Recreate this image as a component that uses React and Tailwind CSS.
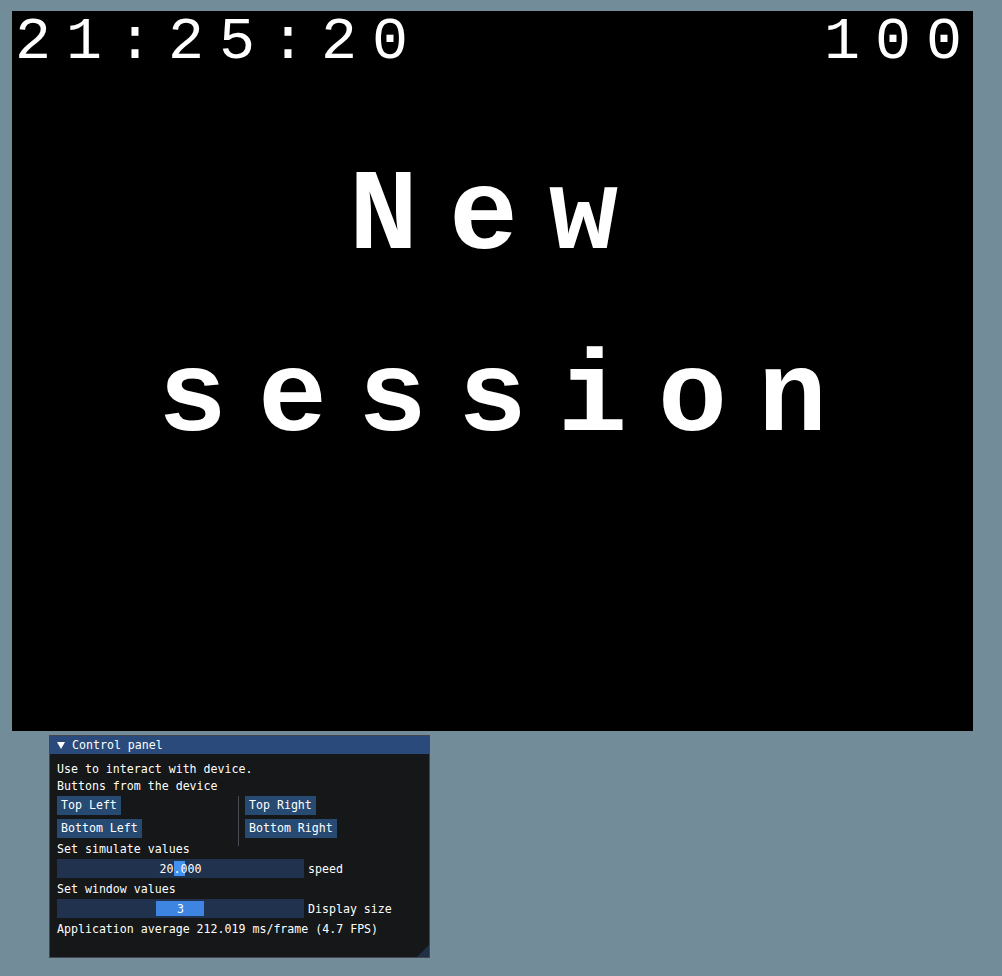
import React from "react";

function Btn({ children }) {
  return (
    <div className="bg-[#274a72] px-[4px] py-[3px] leading-[13px] whitespace-pre">{children}</div>
  );
}

function Slider({ text, grabLeft, grabWidth, grabColor, label }) {
  return (
    <div className="flex items-center gap-[4px]">
      <div className="relative w-[247px] h-[19px] bg-[#20324d]">
        <div
          className={`absolute top-[2px] bottom-[2px] ${grabColor}`}
          style={{ left: grabLeft, width: grabWidth }}
        />
        <div className="absolute inset-0 flex items-center justify-center pt-[1px] leading-[13px] whitespace-pre">
          {text}
        </div>
      </div>
      <div className="pt-[1px] leading-[13px] whitespace-pre">{label}</div>
    </div>
  );
}

function Line({ children }) {
  return <div className="h-[13px] pt-[1px] leading-[12px] whitespace-pre">{children}</div>;
}

export default function App() {
  return (
    <div className="w-[1002px] h-[976px] bg-[#738c99] pt-[11px] pl-[12px] overflow-hidden">
      <div className="w-[961px] h-[720px] bg-black text-white font-['Liberation_Mono',monospace]">
        <div className="flex justify-between pt-[6px] text-[60px] leading-[50px] tracking-[15px] pl-[3px]">
          <span>21:25:20</span>
          <span className="-mr-[4px]">100</span>
        </div>
        <div className="mt-[60px] pl-[31px] text-center font-bold text-[115px] leading-[182px] tracking-[31px]">
          <div className="pr-[18px]">New</div>
          <div>session</div>
        </div>
      </div>

      <div className="relative mt-[4px] ml-[37px] w-[381px] h-[223px] border border-[#43464f] bg-[#151718] text-white text-[11.6px] leading-[13px] font-['DejaVu_Sans_Mono',monospace]">
        <div className="h-[18px] bg-[#294a7a] flex items-center pl-[7px]">
          <svg width="8" height="8" viewBox="0 0 8 8" className="mr-[7px]">
            <polygon points="0,1 8,1 4,8" fill="#ffffff" />
          </svg>
          <span className="whitespace-pre pt-[1px]">Control panel</span>
        </div>
        <div className="px-[7px] pt-[8px] flex flex-col gap-[4px]">
          <Line>Use to interact with device.</Line>
          <Line>Buttons from the device</Line>
          <div className="flex">
            <div className="w-[181px] flex flex-col items-start gap-[4px] pb-[4px]">
              <Btn>Top Left</Btn>
              <Btn>Bottom Left</Btn>
            </div>
            <div className="w-px bg-[#4a4b55] -mb-[4px]" />
            <div className="pl-[6px] flex flex-col items-start gap-[4px]">
              <Btn>Top Right</Btn>
              <Btn>Bottom Right</Btn>
            </div>
          </div>
          <div className="-mt-[4px]">
            <Line>Set simulate values</Line>
          </div>
          <Slider text="20.000" grabLeft={117} grabWidth={11} grabColor="bg-[#4290f0]" label="speed" />
          <Line>Set window values</Line>
          <Slider text="3" grabLeft={99} grabWidth={48} grabColor="bg-[#3d85e0]" label="Display size" />
          <Line>Application average 212.019 ms/frame (4.7 FPS)</Line>
        </div>
        <svg width="12" height="12" viewBox="0 0 12 12" className="absolute right-0 bottom-0">
          <polygon points="12,0 12,12 0,12" fill="#1f3047" />
        </svg>
      </div>
    </div>
  );
}
